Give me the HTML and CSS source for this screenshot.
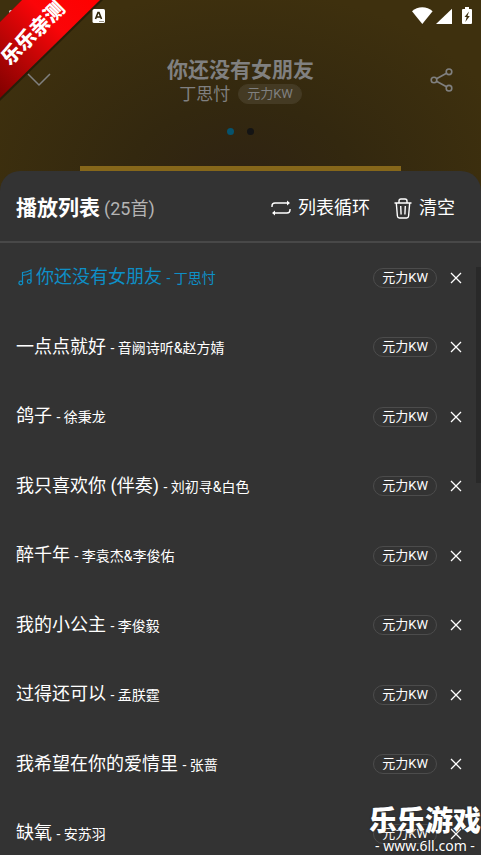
FILE: index.html
```html
<!DOCTYPE html>
<html lang="zh-CN">
<head>
<meta charset="utf-8">
<meta name="viewport" content="width=device-width, initial-scale=1">
<title>播放列表</title>
<link rel="stylesheet" href="styles.css">
</head>
<body>
<div class="app">
  <header class="player">
    <div class="status">
      <svg class="status-app" width="14" height="14" viewBox="0 0 14 14"><rect x="0.5" y="0" width="12.5" height="14" rx="1.5" fill="#fff"/><path d="M3.500 10 6 3.500h1L9.500 10M4.600 8h4" fill="none" stroke="#30270d" stroke-width="1.600"/><path d="M7.5 12.5h4.500" stroke="#30270d" stroke-dasharray="1 1"/></svg>
      <svg width="61" height="18" viewBox="0 0 61 18"><g fill="#fff"><path d="M0 4.200C5.500-1.100 15-1.100 20.600 4.200L10.300 17Z"/><path d="M40 1.700V17H24Z"/><path d="M53 0h4v2h2q1 0 1 1v13q0 1-1 1h-8q-1 0-1-1V3q0-1 1-1h2z"/></g><path d="M57 4.500 52.500 10h2.200l-1.400 5 4.500-6h-2.300z" fill="#3b2e10"/></svg>
    </div>
    <div class="player-bar">
      <button class="icon-btn" aria-label="收起"><svg width="24" height="14" viewBox="0 0 24 14" fill="none" stroke="#808080" stroke-width="1.500"><path d="M1 1 12 12 23 1"/></svg></button>
      <div class="now">
        <h1>你还没有女朋友</h1>
        <p class="artist">丁思忖 <span class="tag tag-dim">元力KW</span></p>
      </div>
      <button class="icon-btn" aria-label="分享"><svg width="24" height="24" viewBox="0 0 24 24" fill="none" stroke="#808080" stroke-width="1.600"><circle cx="4" cy="12" r="2.800"/><circle cx="19" cy="3.800" r="2.800"/><circle cx="19" cy="20.200" r="2.800"/><path d="M6.500 10.700 16.500 5.200M6.500 13.300 16.500 18.800"/></svg></button>
    </div>
    <div class="dots"><i class="dot dot-on"></i><i class="dot"></i></div>
    <div class="cover"></div>
  </header>

  <main class="sheet">
    <div class="sheet-head">
      <h2>播放列表<small>(25首)</small></h2>
      <button class="action"><svg width="20" height="16" viewBox="0 0 20 16" fill="none" stroke="#fff" stroke-width="1.400"><path d="M1 7V6Q1 3 4 3H17M19 9v1Q19 13 16 13H3"/><path d="M16 .5 19 3 16 5.500zM4 10.500 1 13 4 15.500z" fill="#fff" stroke="none"/></svg>列表循环</button>
      <button class="action"><svg width="18" height="21" viewBox="0 0 18 21" fill="none" stroke="#fff" stroke-width="1.400" stroke-linejoin="round"><path d="M.5 5h17M5 5V3Q5 1 7 1h4q2 0 2 2v2M2.300 5 3.400 18q.2 2 2 2h7.200q1.800 0 2-2L15.700 5M6.700 8l.4 8.500M11.300 8l-.4 8.500"/></svg>清空</button>
    </div>
    <ul class="songs">
      <li class="song song-on"><svg class="note" width="14" height="17" viewBox="0 0 14 17" fill="none" stroke="#0e8fc6" stroke-width="1.200"><path d="M4.500 14V3.500Q9 3.300 13 1v11.500M4.500 6.500Q9 6.300 13 4"/><ellipse cx="2.800" cy="14" rx="1.900" ry="1.800"/><ellipse cx="11.200" cy="12.500" rx="1.900" ry="1.800"/></svg><p class="name">你还没有女朋友<small> - 丁思忖</small></p><span class="tag">元力KW</span><button class="remove" aria-label="移除"><svg width="12" height="12" viewBox="0 0 12 12" stroke="#fff" stroke-width="1.300"><path d="M1 1 11 11M11 1 1 11"/></svg></button></li>
      <li class="song"><p class="name">一点点就好<small> - 音阙诗听&amp;赵方婧</small></p><span class="tag">元力KW</span><button class="remove" aria-label="移除"><svg width="12" height="12" viewBox="0 0 12 12" stroke="#fff" stroke-width="1.300"><path d="M1 1 11 11M11 1 1 11"/></svg></button></li>
      <li class="song"><p class="name">鸽子<small> - 徐秉龙</small></p><span class="tag">元力KW</span><button class="remove" aria-label="移除"><svg width="12" height="12" viewBox="0 0 12 12" stroke="#fff" stroke-width="1.300"><path d="M1 1 11 11M11 1 1 11"/></svg></button></li>
      <li class="song"><p class="name">我只喜欢你 (伴奏)<small> - 刘初寻&amp;白色</small></p><span class="tag">元力KW</span><button class="remove" aria-label="移除"><svg width="12" height="12" viewBox="0 0 12 12" stroke="#fff" stroke-width="1.300"><path d="M1 1 11 11M11 1 1 11"/></svg></button></li>
      <li class="song"><p class="name">醉千年<small> - 李袁杰&amp;李俊佑</small></p><span class="tag">元力KW</span><button class="remove" aria-label="移除"><svg width="12" height="12" viewBox="0 0 12 12" stroke="#fff" stroke-width="1.300"><path d="M1 1 11 11M11 1 1 11"/></svg></button></li>
      <li class="song"><p class="name">我的小公主<small> - 李俊毅</small></p><span class="tag">元力KW</span><button class="remove" aria-label="移除"><svg width="12" height="12" viewBox="0 0 12 12" stroke="#fff" stroke-width="1.300"><path d="M1 1 11 11M11 1 1 11"/></svg></button></li>
      <li class="song"><p class="name">过得还可以<small> - 孟朕霆</small></p><span class="tag">元力KW</span><button class="remove" aria-label="移除"><svg width="12" height="12" viewBox="0 0 12 12" stroke="#fff" stroke-width="1.300"><path d="M1 1 11 11M11 1 1 11"/></svg></button></li>
      <li class="song"><p class="name">我希望在你的爱情里<small> - 张蔷</small></p><span class="tag">元力KW</span><button class="remove" aria-label="移除"><svg width="12" height="12" viewBox="0 0 12 12" stroke="#fff" stroke-width="1.300"><path d="M1 1 11 11M11 1 1 11"/></svg></button></li>
      <li class="song"><p class="name">缺氧<small> - 安苏羽</small></p><span class="tag">元力KW</span><button class="remove" aria-label="移除"><svg width="12" height="12" viewBox="0 0 12 12" stroke="#fff" stroke-width="1.300"><path d="M1 1 11 11M11 1 1 11"/></svg></button></li>
    </ul>
    <div class="scrollbar"></div>
  </main>

  <div class="ribbon">
    <svg width="104" height="104" viewBox="0 0 104 104"><defs><linearGradient id="red" x1="0" y1="1" x2="1" y2="0"><stop offset="0" stop-color="#800000"/><stop offset=".3" stop-color="#b50505"/><stop offset=".65" stop-color="#fb0508"/><stop offset="1" stop-color="#f00"/></linearGradient></defs><circle cx="11" cy="12" r="2" fill="#ddd"/><path d="M22 0H103L0 101V22Z" fill="#000" opacity=".35"/><path d="M22 0H100L0 98V22Z" fill="url(#red)"/></svg>
    <span class="ribbon-text">乐乐亲测</span>
  </div>
  <div class="watermark"><b>乐乐游戏</b><span>- www.6ll.com -</span></div>
</div>
</body>
</html>
```
FILE: styles.css
```css
* { box-sizing: border-box; margin: 0; padding: 0; }
body {
  background: #333;
  color: #fff;
  font-family: Roboto, "Noto Sans CJK SC", sans-serif;
}
button {
  background: none;
  border: 0;
  color: inherit;
  font: inherit;
  cursor: pointer;
}
svg { display: block; flex: none; }
.app {
  position: relative;
  height: 100vh;
  overflow: hidden;
  display: flex;
  flex-direction: column;
  background: radial-gradient(ellipse 280px 190px at 50% 180px, #2f2313 0, #33280f 40%, #3e300e 100%);
}

/* Player behind the sheet */
.player { flex: none; display: flex; flex-direction: column; }
.status {
  height: 32px;
  padding: 0 8px 0 92px;
  display: flex;
  align-items: center;
  justify-content: space-between;
}
.player-bar {
  display: flex;
  align-items: center;
  justify-content: space-between;
  padding: 24px 27px 0;
}
.icon-btn { height: 24px; display: flex; align-items: center; }
.now { text-align: center; color: #808080; }
.now h1 { font-size: 21px; line-height: 28px; font-weight: 700; }
.artist {
  display: flex;
  align-items: center;
  justify-content: center;
  gap: 8px;
  font-size: 17px;
  line-height: 20px;
}
.tag {
  flex: none;
  height: 20px;
  padding: 0 8px;
  border: 1px solid #4c4c4c;
  border-radius: 10px;
  font-size: 13px;
  line-height: 17px;
}
.tag-dim { border-color: #443a23; background: #443a23; }
.dots {
  display: flex;
  justify-content: center;
  gap: 13px;
  padding-top: 24px;
}
.dot { width: 7px; height: 7px; border-radius: 50%; background: #141414; }
.dot-on { background: #07536d; }
.cover {
  height: 5px;
  margin: 31px 80px 0;
  background: #86671a;
}

/* Playlist sheet */
.sheet {
  position: relative;
  flex: 1;
  min-height: 0;
  overflow: hidden;
  border-radius: 20px 20px 0 0;
  background: #333;
}
.sheet-head {
  display: flex;
  align-items: center;
  gap: 24px;
  height: 72px;
  padding: 4px 26px 0 16px;
  border-bottom: 2px solid #484848;
}
.sheet-head h2 { flex: 1; font-size: 21px; line-height: 28px; font-weight: 700; }
.sheet-head small { margin-left: 4px; color: #b4b4b4; font-size: 18px; font-weight: 400; }
.action {
  display: flex;
  align-items: center;
  gap: 7px;
  font-size: 18px;
  line-height: 24px;
}
.songs { list-style: none; }
.song {
  display: flex;
  align-items: center;
  height: 69px;
  padding: 0 19px 0 16px;
}
.song:nth-child(even) { height: 70px; }
.song-on .name { color: #0e8fc6; }
.note { margin: 0 4px 0 2px; }
.name {
  flex: 1;
  min-width: 0;
  font-size: 18px;
  line-height: 24px;
  white-space: nowrap;
}
.name small { margin-left: 1px; font-size: 14px; }
.remove { margin-left: 13px; }
.scrollbar {
  position: absolute;
  top: 96px;
  right: 0;
  width: 5px;
  height: 216px;
  background: #292929;
}

/* Overlays */
.ribbon { position: absolute; top: 0; left: 0; }
.ribbon-text {
  position: absolute;
  top: 33px;
  left: 33px;
  font-size: 20px;
  line-height: 24px;
  font-weight: 900;
  white-space: nowrap;
  transform: translate(-50%, -50%) rotate(-45deg);
}
.watermark {
  position: absolute;
  right: 0;
  bottom: 0;
  display: flex;
  flex-direction: column;
  align-items: center;
  text-shadow: 0 0 2px #222;
}
.watermark b { font-size: 28px; line-height: 30px; font-weight: 900; }
.watermark span { font-family: "Noto Sans", sans-serif; font-size: 14px; line-height: 18px; }
```
